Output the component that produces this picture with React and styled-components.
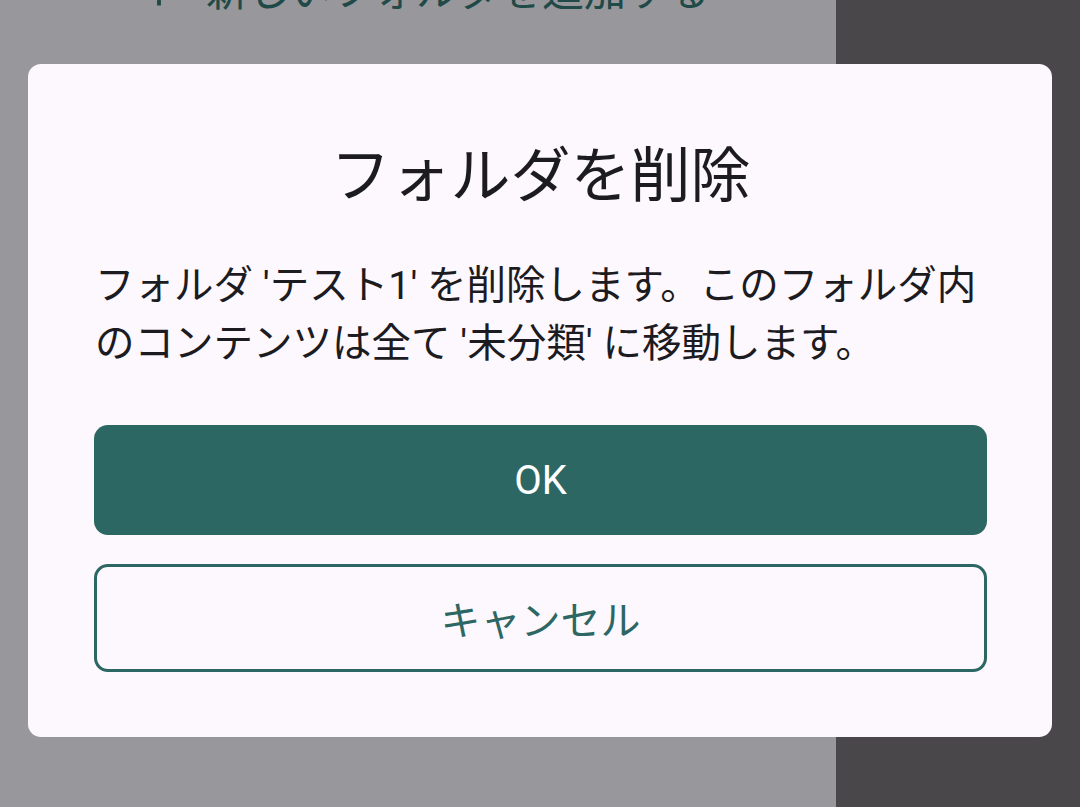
import React from "react";
import styled, { createGlobalStyle } from "styled-components";

const Global = createGlobalStyle`
  html, body { margin: 0; padding: 0; height: 100%; overflow: hidden; }
  body { font-family: Roboto, "Noto Sans CJK JP", sans-serif; }
  #root { height: 100%; }
`;

const Screen = styled.div`
  position: relative;
  width: 1080px;
  height: 807px;
  display: flex;
  overflow: hidden;
`;

const MainPane = styled.div`
  width: 836px;
  background: #98979b;
  display: flex;
  flex-direction: column;
`;

const SidePane = styled.div`
  flex: 1;
  background: #4a474b;
`;

const AddRow = styled.div`
  display: flex;
  align-items: center;
  gap: 24px;
  height: 60px;
  margin-top: -38px;
  padding-left: 136px;
  color: #1f4a47;
  font-family: Roboto, "Noto Sans CJK JP", sans-serif;
  font-size: 42px;
  line-height: 60px;
  white-space: nowrap;
`;

const PlusIcon = styled.svg`
  width: 46px;
  height: 46px;
  flex: none;
`;

const Dialog = styled.div`
  position: absolute;
  left: 28px;
  top: 64px;
  width: 1024px;
  height: 673px;
  box-sizing: border-box;
  background: #fcf8fd;
  border-radius: 13px;
  padding: 68px 65px 0 66px;
  display: flex;
  flex-direction: column;
`;

const Title = styled.h2`
  margin: 0;
  text-align: center;
  font-family: Roboto, "Noto Sans CJK JP", sans-serif;
  font-weight: 400;
  font-size: 60px;
  line-height: 90px;
  color: #1c1b1f;
`;

const Message = styled.p`
  margin: 35px 0 0 1px;
  font-family: Roboto, "Noto Sans CJK JP", sans-serif;
  font-size: 39.5px;
  line-height: 58px;
  color: #1c1b1f;
`;

const Actions = styled.div`
  margin-top: 52px;
  display: flex;
  flex-direction: column;
  gap: 29px;
`;

const Button = styled.button`
  height: ${(p) => (p.$outlined ? "108px" : "110px")};
  box-sizing: border-box;
  border-radius: 14px;
  border: ${(p) => (p.$outlined ? "3px solid #2d6764" : "none")};
  background: ${(p) => (p.$outlined ? "transparent" : "#2d6764")};
  color: ${(p) => (p.$outlined ? "#2d6764" : "#ffffff")};
  font-family: Roboto, "Noto Sans CJK JP", sans-serif;
  font-size: 40px;
  font-weight: 400;
  padding: 0;
  cursor: pointer;
`;

export default function App() {
  return (
    <>
      <Global />
      <Screen>
        <MainPane>
          <AddRow>
            <PlusIcon viewBox="0 0 24 24" aria-hidden="true">
              <path d="M19 13h-6v6h-2v-6H5v-2h6V5h2v6h6v2z" fill="currentColor" />
            </PlusIcon>
            <span>新しいフォルダを追加する</span>
          </AddRow>
        </MainPane>
        <SidePane />
        <Dialog>
          <Title>フォルダを削除</Title>
          <Message>
            フォルダ 'テスト1' を削除します。このフォルダ内のコンテンツは全て '未分類' に移動します。
          </Message>
          <Actions>
            <Button>OK</Button>
            <Button $outlined>キャンセル</Button>
          </Actions>
        </Dialog>
      </Screen>
    </>
  );
}
